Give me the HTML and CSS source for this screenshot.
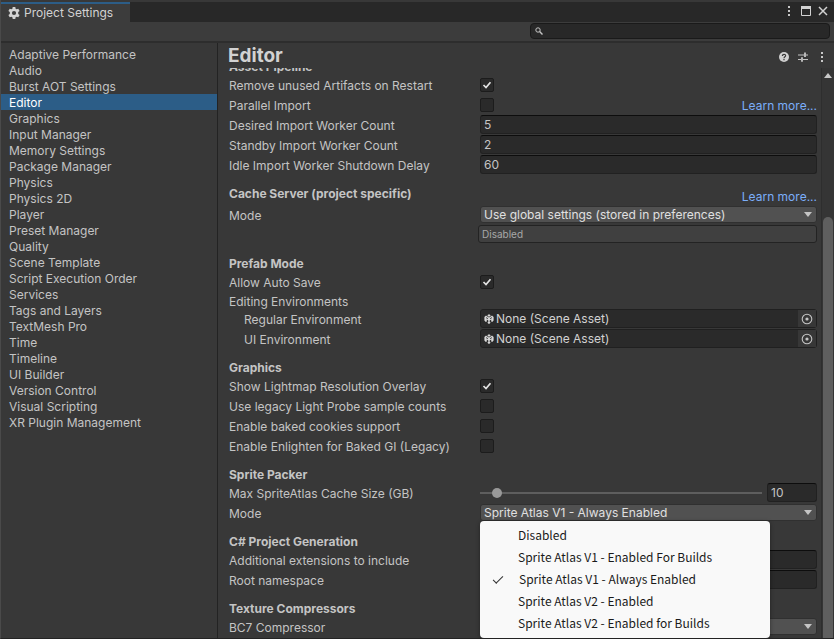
FILE: index.html
```html
<!DOCTYPE html>
<html lang="en">
<head>
<meta charset="utf-8">
<meta name="viewport" content="width=device-width, initial-scale=1">
<title>Project Settings</title>
<link rel="stylesheet" href="styles.css">
</head>
<body>
<svg hidden>
  <symbol id="scene" viewBox="0 0 10 10">
    <path d="M3.600.9L5 .2l1.400.7v1L5 2.700l-1.400-.8zM.4 3L2 1.600l1.300 1L5 3.600l1.700-1L8 1.600 9.600 3v3.400L8.200 8 7.200 7.400V5.600L5.700 6.400V8l1 .8L5 9.900 3.300 8.800l1-.8V6.400L2.800 5.600v1.800L1.800 8 .4 6.400z" fill="#d8d8d8"/>
    <path d="M2 3.600L4 4.700M8 3.600L6 4.700" stroke="#2a2a2a" stroke-width=".8"/>
  </symbol>
  <symbol id="target" viewBox="0 0 12 12">
    <circle cx="6" cy="6" r="4.800" fill="none" stroke="#c4c4c4" stroke-width="1.100"/>
    <circle cx="6" cy="6" r="1.600" fill="#c4c4c4"/>
  </symbol>
  <symbol id="kebab" viewBox="0 0 4 12">
    <path d="M1 1h2v2H1zM1 5h2v2H1zM1 9h2v2H1z" fill="#c8c8c8"/>
  </symbol>
</svg>
<div class="window">
  <header class="tabbar">
    <button class="tab" type="button">
      <svg width="12" height="12" viewBox="0 0 12 12"><path fill="#d2d2d2" fill-rule="evenodd" d="M4.700 0h2.600l.3 1.700 1 .6 1.700-.6 1.300 2.200-1.400 1.100v2l1.400 1.100-1.300 2.200-1.700-.6-1 .6-.3 1.700H4.700l-.3-1.700-1-.6-1.700.6L.4 8.100 1.800 7V5L.4 3.900l1.300-2.200 1.700.6 1-.6zM6 3.900a2.100 2.100 0 1 0 0 4.200 2.100 2.100 0 0 0 0-4.200z"/></svg>
      Project Settings
    </button>
    <div class="window-buttons">
      <button type="button" aria-label="Window menu"><svg width="4" height="12"><use href="#kebab"/></svg></button>
      <button type="button" aria-label="Maximize"><svg width="10" height="10" viewBox="0 0 10 10"><path d="M.5.5h9v9h-9z" fill="none" stroke="#d2d2d2"/><path d="M0 0h10v3H0z" fill="#d2d2d2"/></svg></button>
      <button type="button" aria-label="Close"><svg width="10" height="10" viewBox="0 0 10 10"><path d="M1 1l8 8M9 1L1 9" stroke="#d2d2d2" stroke-width="1.500"/></svg></button>
    </div>
  </header>
  <div class="toolbar">
    <label class="search">
      <svg width="8" height="8" viewBox="0 0 8 8"><circle cx="3" cy="3" r="2.200" fill="none" stroke="#c4c4c4" stroke-width="1"/><path d="M4.600 4.600L7.500 7.500" stroke="#c4c4c4" stroke-width="1.400"/></svg>
      <input type="text" aria-label="Search settings">
    </label>
  </div>
  <div class="body">
    <nav class="sidebar">
      <a href="#">Adaptive Performance</a>
      <a href="#">Audio</a>
      <a href="#">Burst AOT Settings</a>
      <a href="#" class="selected" aria-current="page">Editor</a>
      <a href="#">Graphics</a>
      <a href="#">Input Manager</a>
      <a href="#">Memory Settings</a>
      <a href="#">Package Manager</a>
      <a href="#">Physics</a>
      <a href="#">Physics 2D</a>
      <a href="#">Player</a>
      <a href="#">Preset Manager</a>
      <a href="#">Quality</a>
      <a href="#">Scene Template</a>
      <a href="#">Script Execution Order</a>
      <a href="#">Services</a>
      <a href="#">Tags and Layers</a>
      <a href="#">TextMesh Pro</a>
      <a href="#">Time</a>
      <a href="#">Timeline</a>
      <a href="#">UI Builder</a>
      <a href="#">Version Control</a>
      <a href="#">Visual Scripting</a>
      <a href="#">XR Plugin Management</a>
    </nav>
    <main class="main">
      <div class="title">
        <h1>Editor</h1>
        <div class="title-buttons">
          <button type="button" aria-label="Help"><svg width="10" height="10" viewBox="0 0 10 10"><circle cx="5" cy="5" r="5" fill="#d0d0d0"/><path d="M3.400 3.900C3.400 1.700 6.700 1.800 6.600 3.800C6.600 4.800 5 4.900 5 6.200M5 7v1.200" fill="none" stroke="#383838" stroke-width="1.200"/></svg></button>
          <button type="button" aria-label="Presets"><svg width="10" height="10" viewBox="0 0 10 10"><path d="M0 3h6M8 3h2M0 7.500h3M5 7.500h5" stroke="#c4c4c4" stroke-width="1.200"/><path d="M7 .5v4.500M4 5.200v4.500" stroke="#d8d8d8" stroke-width="1.600"/></svg></button>
          <button type="button" aria-label="More"><svg width="4" height="12"><use href="#kebab"/></svg></button>
        </div>
      </div>
      <div class="viewport">
        <form class="settings">
          <section>
            <h2>Asset Pipeline</h2>
            <div class="row"><label for="artifacts">Remove unused Artifacts on Restart</label><input type="checkbox" id="artifacts" checked></div>
            <div class="row"><label for="parallel">Parallel Import</label><div class="split"><input type="checkbox" id="parallel"><a class="link" href="#">Learn more...</a></div></div>
            <div class="row"><label for="desired">Desired Import Worker Count</label><input type="text" id="desired" value="5"></div>
            <div class="row"><label for="standby">Standby Import Worker Count</label><input type="text" id="standby" value="2"></div>
            <div class="row"><label for="idle">Idle Import Worker Shutdown Delay</label><input type="text" id="idle" value="60"></div>
          </section>
          <section>
            <div class="heading"><h2>Cache Server (project specific)</h2><a class="link" href="#">Learn more...</a></div>
            <div class="row"><label for="cache">Mode</label><select id="cache"><option>Use global settings (stored in preferences)</option></select></div>
            <p class="notice">Disabled</p>
          </section>
          <section>
            <h2>Prefab Mode</h2>
            <div class="row"><label for="autosave">Allow Auto Save</label><input type="checkbox" id="autosave" checked></div>
            <div class="subheading">Editing Environments</div>
            <div class="row nested"><label for="regular">Regular Environment</label><div class="object"><svg width="10" height="10"><use href="#scene"/></svg><input type="text" id="regular" value="None (Scene Asset)" readonly><button type="button" aria-label="Pick regular environment"><svg width="12" height="12"><use href="#target"/></svg></button></div></div>
            <div class="row nested"><label for="ui">UI Environment</label><div class="object"><svg width="10" height="10"><use href="#scene"/></svg><input type="text" id="ui" value="None (Scene Asset)" readonly><button type="button" aria-label="Pick UI environment"><svg width="12" height="12"><use href="#target"/></svg></button></div></div>
          </section>
          <section>
            <h2>Graphics</h2>
            <div class="row"><label for="lightmap">Show Lightmap Resolution Overlay</label><input type="checkbox" id="lightmap" checked></div>
            <div class="row"><label for="probe">Use legacy Light Probe sample counts</label><input type="checkbox" id="probe"></div>
            <div class="row"><label for="cookies">Enable baked cookies support</label><input type="checkbox" id="cookies"></div>
            <div class="row"><label for="enlighten">Enable Enlighten for Baked GI (Legacy)</label><input type="checkbox" id="enlighten"></div>
          </section>
          <section>
            <h2>Sprite Packer</h2>
            <div class="row"><label for="size">Max SpriteAtlas Cache Size (GB)</label><div class="slider"><input type="range" id="size" min="1" max="200" value="10"><input type="text" aria-label="Cache size value" value="10"></div></div>
            <div class="row"><label for="packer">Mode</label>
              <div class="dropdown">
                <select id="packer"><option>Sprite Atlas V1 - Always Enabled</option></select>
                <ul class="menu" role="listbox" aria-label="Sprite Packer mode">
                  <li role="option">Disabled</li>
                  <li role="option">Sprite Atlas V1 - Enabled For Builds</li>
                  <li role="option" aria-selected="true">Sprite Atlas V1 - Always Enabled</li>
                  <li role="option">Sprite Atlas V2 - Enabled</li>
                  <li role="option">Sprite Atlas V2 - Enabled for Builds</li>
                </ul>
              </div>
            </div>
          </section>
          <section>
            <h2>C# Project Generation</h2>
            <div class="row"><label for="extensions">Additional extensions to include</label><input type="text" id="extensions"></div>
            <div class="row"><label for="namespace">Root namespace</label><input type="text" id="namespace"></div>
          </section>
          <section>
            <h2>Texture Compressors</h2>
            <div class="row"><label for="bc7">BC7 Compressor</label><select id="bc7"><option></option></select></div>
          </section>
        </form>
        <div class="scrollbar">
          <svg width="8" height="5" viewBox="0 0 8 5"><path d="M0 5L4 0l4 5z" fill="#c8c8c8"/></svg>
          <div class="thumb"></div>
        </div>
      </div>
    </main>
  </div>
</div>
</body>
</html>
```
FILE: styles.css
```css
* {
  box-sizing: border-box;
}

body {
  margin: 0;
  background: #383838;
  color: #c4c4c4;
  font: 12px/16px Inter, "Liberation Sans", sans-serif;
}

button,
input,
select {
  margin: 0;
  border: 0;
  padding: 0;
  background: none;
  color: inherit;
  font: inherit;
}

svg {
  display: block;
  flex: none;
}

svg[hidden] {
  display: none;
}

.window {
  display: flex;
  flex-direction: column;
  height: 100vh;
  overflow: hidden;
  border-left: 1px solid #4a4a4a;
  border-bottom: 1px solid #232323;
}

.tabbar {
  display: flex;
  justify-content: space-between;
  height: 22px;
  border-top: 2px solid #383838;
  background: #282828;
}

.tab {
  display: flex;
  align-items: center;
  gap: 4px;
  padding: 0 17px 0 7px;
  border-top: 2px solid #2c5d87;
  background: #3c3c3c;
  color: #d2d2d2;
}

.window-buttons {
  display: flex;
  align-items: center;
  gap: 7px;
  padding: 0 6px 2px 0;
}

.window-buttons button:first-child {
  margin-right: 3px;
}

.toolbar {
  display: flex;
  justify-content: flex-end;
  height: 21px;
  padding: 1px 4px 2px;
  border-bottom: 2px solid #2d2d2d;
  background: #3c3c3c;
}

.search {
  display: flex;
  align-items: center;
  gap: 4px;
  width: 300px;
  padding-left: 4px;
  border: 1px solid #1a1a1a;
  border-radius: 4px;
  background: #282828;
}

.search input {
  flex: 1;
  min-width: 0;
}

.body {
  display: flex;
  flex: 1;
  min-height: 0;
}

.sidebar {
  flex: none;
  width: 217px;
  padding-top: 3px;
  border-right: 1px solid #232323;
}

.sidebar a {
  display: block;
  height: 16px;
  padding-left: 8px;
  color: inherit;
  line-height: 18px;
  text-decoration: none;
}

.sidebar .selected {
  background: #2c5d87;
  color: #fff;
}

.main {
  display: flex;
  flex: 1;
  flex-direction: column;
  min-width: 0;
}

.title {
  display: flex;
  justify-content: space-between;
  height: 25px;
  padding: 0 10px;
}

h1 {
  margin: 0;
  color: #d2d2d2;
  font-size: 19px;
  font-weight: 700;
  line-height: 25px;
}

.title-buttons {
  display: flex;
  align-items: center;
  gap: 12px;
  padding-top: 2px;
}

.title-buttons button:nth-child(2) {
  margin-left: -3px;
}

.viewport {
  display: flex;
  flex: 1;
  min-height: 0;
  overflow: hidden;
}

.settings {
  display: flex;
  flex: 1;
  flex-direction: column;
  gap: 9px;
  min-width: 0;
  margin-top: -11px;
  padding: 0 4px 0 11px;
}

h2 {
  height: 18px;
  margin: 0;
  font-size: 12px;
  font-weight: 700;
  line-height: 20px;
}

.heading {
  display: flex;
  justify-content: space-between;
  height: 21px;
}

.heading .link {
  align-self: flex-end;
}

.link {
  color: #7baefa;
  text-decoration: none;
}

.row {
  display: grid;
  grid-template-columns: 251px 1fr;
  align-items: center;
  height: 20px;
}

.row label,
.split .link {
  padding-top: 2px;
}

.nested label {
  padding-left: 15px;
}

.subheading {
  height: 17px;
  line-height: 19px;
}

.split {
  display: flex;
  align-items: center;
  justify-content: space-between;
}

input[type="checkbox"] {
  width: 14px;
  height: 14px;
  border: 1px solid #1c1c1c;
  border-radius: 2px;
  background: #2a2a2a;
  appearance: none;
}

input[type="checkbox"]:checked {
  background: #2a2a2a url("data:image/svg+xml,%3Csvg xmlns='http://www.w3.org/2000/svg' width='12' height='12'%3E%3Cpath d='M2.500 6L5 8.500L9.500 3.200' fill='none' stroke='%23e4e4e4' stroke-width='1.700'/%3E%3C/svg%3E") no-repeat center;
}

.row input[type="text"] {
  align-self: start;
  width: 100%;
  min-width: 0;
  height: 19px;
  padding: 0 3px;
  border: 1px solid #212121;
  border-top-color: #0d0d0d;
  border-radius: 3px;
  background: #2a2a2a;
}

select {
  align-self: start;
  width: 100%;
  height: 17px;
  margin-top: 1px;
  padding: 0 20px 0 3px;
  border: 1px solid #303030;
  border-radius: 3px;
  background: #515151 url("data:image/svg+xml,%3Csvg xmlns='http://www.w3.org/2000/svg' width='8' height='5'%3E%3Cpath d='M0 0h8L4 5z' fill='%23c4c4c4'/%3E%3C/svg%3E") no-repeat right 4px center;
  color: #e0e0e0;
  line-height: 15px;
  appearance: none;
}

.notice {
  height: 18px;
  margin: 0 0 11px 249px;
  padding: 0 3px;
  border: 1px solid #232323;
  border-radius: 3px;
  background: #404040;
  color: #a8a8a8;
  font-size: 10px;
  line-height: 17px;
}

section:has(.notice) {
  margin-bottom: -9px;
}

.object {
  display: flex;
  align-self: start;
  align-items: center;
  height: 19px;
  padding-left: 3px;
  border: 1px solid #202020;
  border-radius: 3px;
  background: #2a2a2a;
}

.object input[type="text"] {
  flex: 1;
  height: 17px;
  padding: 0 2px;
  border: 0;
  background: none;
  color: #d2d2d2;
}

.object button {
  display: grid;
  place-items: center;
  width: 18px;
  height: 17px;
  background: #373737;
}

.slider {
  display: grid;
  grid-template-columns: 1fr 50px;
  gap: 5px;
  align-items: center;
  align-self: start;
}

input[type="range"] {
  width: 100%;
  height: 10px;
  appearance: none;
}

input[type="range"]::-webkit-slider-runnable-track {
  height: 2px;
  background: #5e5e5e;
}

input[type="range"]::-webkit-slider-thumb {
  width: 10px;
  height: 10px;
  margin-top: -4px;
  border-radius: 50%;
  background: #999;
  appearance: none;
}

.dropdown {
  position: relative;
  display: flex;
  align-self: start;
}

.menu {
  position: absolute;
  z-index: 1;
  top: 100%;
  left: 0;
  width: 290px;
  margin: 0;
  padding: 3px 0 4px;
  border-radius: 4px;
  background: #f9f9f9;
  box-shadow: 0 1px 4px rgb(0 0 0 / 40%);
  color: #1a1a1a;
  font-family: "Noto Sans CJK KR", "Noto Sans", sans-serif;
  line-height: 22px;
  list-style: none;
}

.menu li {
  display: flex;
  align-items: center;
  padding-left: 38px;
}

.menu [aria-selected]::before {
  width: 9px;
  height: 4px;
  margin: -2px 16px 0 -25px;
  border-bottom: 1px solid #333;
  border-left: 1px solid #333;
  transform: rotate(-45deg);
  content: "";
}

.scrollbar {
  display: flex;
  flex: none;
  flex-direction: column;
  align-items: center;
  width: 13px;
  padding-top: 5px;
  border-left: 1px solid #2e2e2e;
  background: #353535;
}

.thumb {
  flex: 1;
  width: 10px;
  margin-top: 139px;
  border-radius: 5px 5px 0 0;
  background: #5f5f5f;
}
```
